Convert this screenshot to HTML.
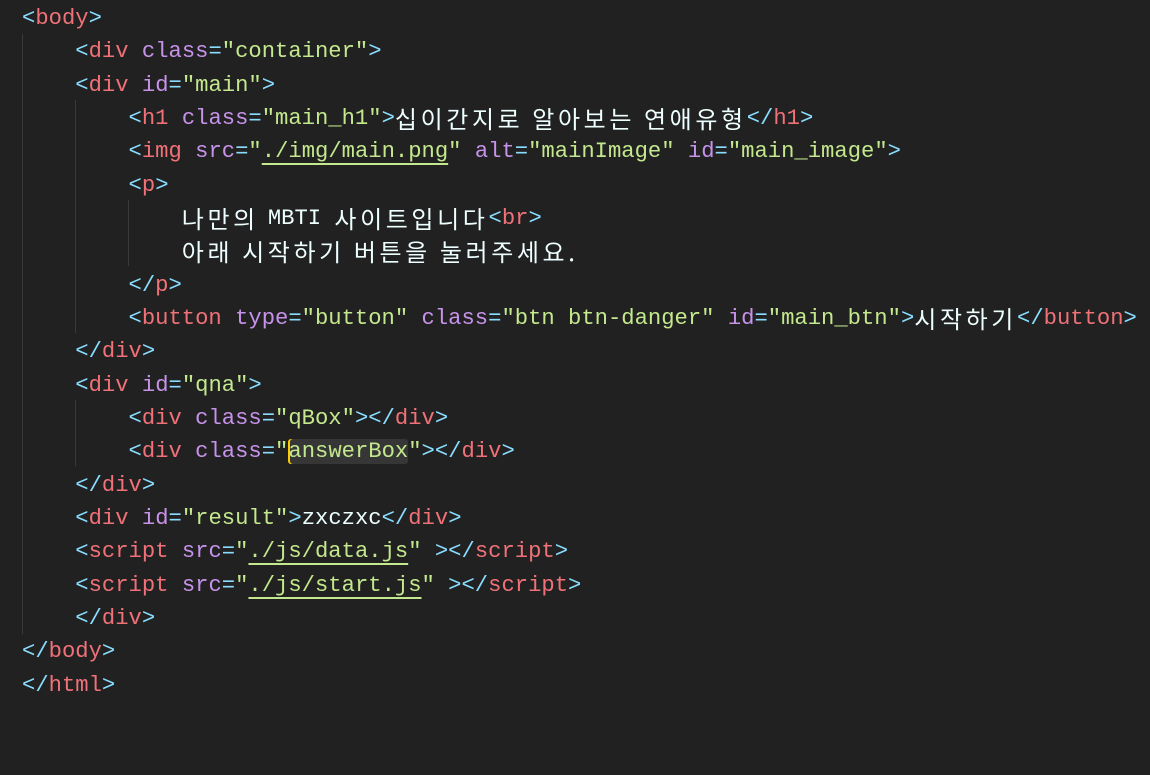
<!DOCTYPE html>
<html><head><meta charset="utf-8"><style>
html,body{margin:0;padding:0;background:#212121;width:1150px;height:775px;overflow:hidden}
.ed{position:absolute;left:22px;top:2px;font-family:"Liberation Mono","Noto Sans CJK KR",monospace;font-size:22.2px;line-height:33.33px;color:#eeffff}
.l{height:33.33px;white-space:pre;overflow:hidden}
.p{color:#89ddff}.t{color:#f07178}.a{color:#c792ea}.s{color:#c3e88d}.w{color:#eeffff}
.k{font-family:"Noto Sans CJK KR",sans-serif;font-size:24px;letter-spacing:3.6px;display:inline-block;height:33.33px;line-height:31px;vertical-align:top}
.u{text-decoration:underline;text-decoration-color:#c3e88d;text-underline-offset:6px;text-decoration-thickness:2px}
.g{position:absolute;width:1px;background:#3a3a3a}
.hl{background:#363636;border-radius:3px;box-shadow:inset 2px 0 0 #ffcc00}
</style></head><body>
<div class="g" style="left:22px;top:34px;height:600px"></div>
<div class="g" style="left:75px;top:100px;height:233px"></div>
<div class="g" style="left:75px;top:400px;height:66px"></div>
<div class="g" style="left:128px;top:200px;height:66px"></div>
<div class="ed"><div class="l"><span class="p">&lt;</span><span class="t">body</span><span class="p">&gt;</span></div><div class="l">    <span class="p">&lt;</span><span class="t">div</span> <span class="a">class</span><span class="p">=</span><span class="s">"container"</span><span class="p">&gt;</span></div><div class="l">    <span class="p">&lt;</span><span class="t">div</span> <span class="a">id</span><span class="p">=</span><span class="s">"main"</span><span class="p">&gt;</span></div><div class="l">        <span class="p">&lt;</span><span class="t">h1</span> <span class="a">class</span><span class="p">=</span><span class="s">"main_h1"</span><span class="p">&gt;</span><span class="k">십이간지로 알아보는 연애유형</span><span class="p">&lt;/</span><span class="t">h1</span><span class="p">&gt;</span></div><div class="l">        <span class="p">&lt;</span><span class="t">img</span> <span class="a">src</span><span class="p">=</span><span class="s">"<span class="u">./img/main.png</span>"</span> <span class="a">alt</span><span class="p">=</span><span class="s">"mainImage"</span> <span class="a">id</span><span class="p">=</span><span class="s">"main_image"</span><span class="p">&gt;</span></div><div class="l">        <span class="p">&lt;</span><span class="t">p</span><span class="p">&gt;</span></div><div class="l">            <span class="k">나만의 </span>MBTI <span class="k">사이트입니다</span><span class="p">&lt;</span><span class="t">br</span><span class="p">&gt;</span></div><div class="l">            <span class="k">아래 시작하기 버튼을 눌러주세요.</span></div><div class="l">        <span class="p">&lt;/</span><span class="t">p</span><span class="p">&gt;</span></div><div class="l">        <span class="p">&lt;</span><span class="t">button</span> <span class="a">type</span><span class="p">=</span><span class="s">"button"</span> <span class="a">class</span><span class="p">=</span><span class="s">"btn btn-danger"</span> <span class="a">id</span><span class="p">=</span><span class="s">"main_btn"</span><span class="p">&gt;</span><span class="k">시작하기</span><span class="p">&lt;/</span><span class="t">button</span><span class="p">&gt;</span></div><div class="l">    <span class="p">&lt;/</span><span class="t">div</span><span class="p">&gt;</span></div><div class="l">    <span class="p">&lt;</span><span class="t">div</span> <span class="a">id</span><span class="p">=</span><span class="s">"qna"</span><span class="p">&gt;</span></div><div class="l">        <span class="p">&lt;</span><span class="t">div</span> <span class="a">class</span><span class="p">=</span><span class="s">"qBox"</span><span class="p">&gt;&lt;/</span><span class="t">div</span><span class="p">&gt;</span></div><div class="l">        <span class="p">&lt;</span><span class="t">div</span> <span class="a">class</span><span class="p">=</span><span class="s">"<span class="hl">answerBox</span>"</span><span class="p">&gt;&lt;/</span><span class="t">div</span><span class="p">&gt;</span></div><div class="l">    <span class="p">&lt;/</span><span class="t">div</span><span class="p">&gt;</span></div><div class="l">    <span class="p">&lt;</span><span class="t">div</span> <span class="a">id</span><span class="p">=</span><span class="s">"result"</span><span class="p">&gt;</span>zxczxc<span class="p">&lt;/</span><span class="t">div</span><span class="p">&gt;</span></div><div class="l">    <span class="p">&lt;</span><span class="t">script</span> <span class="a">src</span><span class="p">=</span><span class="s">"<span class="u">./js/data.js</span>"</span> <span class="p">&gt;&lt;/</span><span class="t">script</span><span class="p">&gt;</span></div><div class="l">    <span class="p">&lt;</span><span class="t">script</span> <span class="a">src</span><span class="p">=</span><span class="s">"<span class="u">./js/start.js</span>"</span> <span class="p">&gt;&lt;/</span><span class="t">script</span><span class="p">&gt;</span></div><div class="l">    <span class="p">&lt;/</span><span class="t">div</span><span class="p">&gt;</span></div><div class="l"><span class="p">&lt;/</span><span class="t">body</span><span class="p">&gt;</span></div><div class="l"><span class="p">&lt;/</span><span class="t">html</span><span class="p">&gt;</span></div></div>
</body></html>
